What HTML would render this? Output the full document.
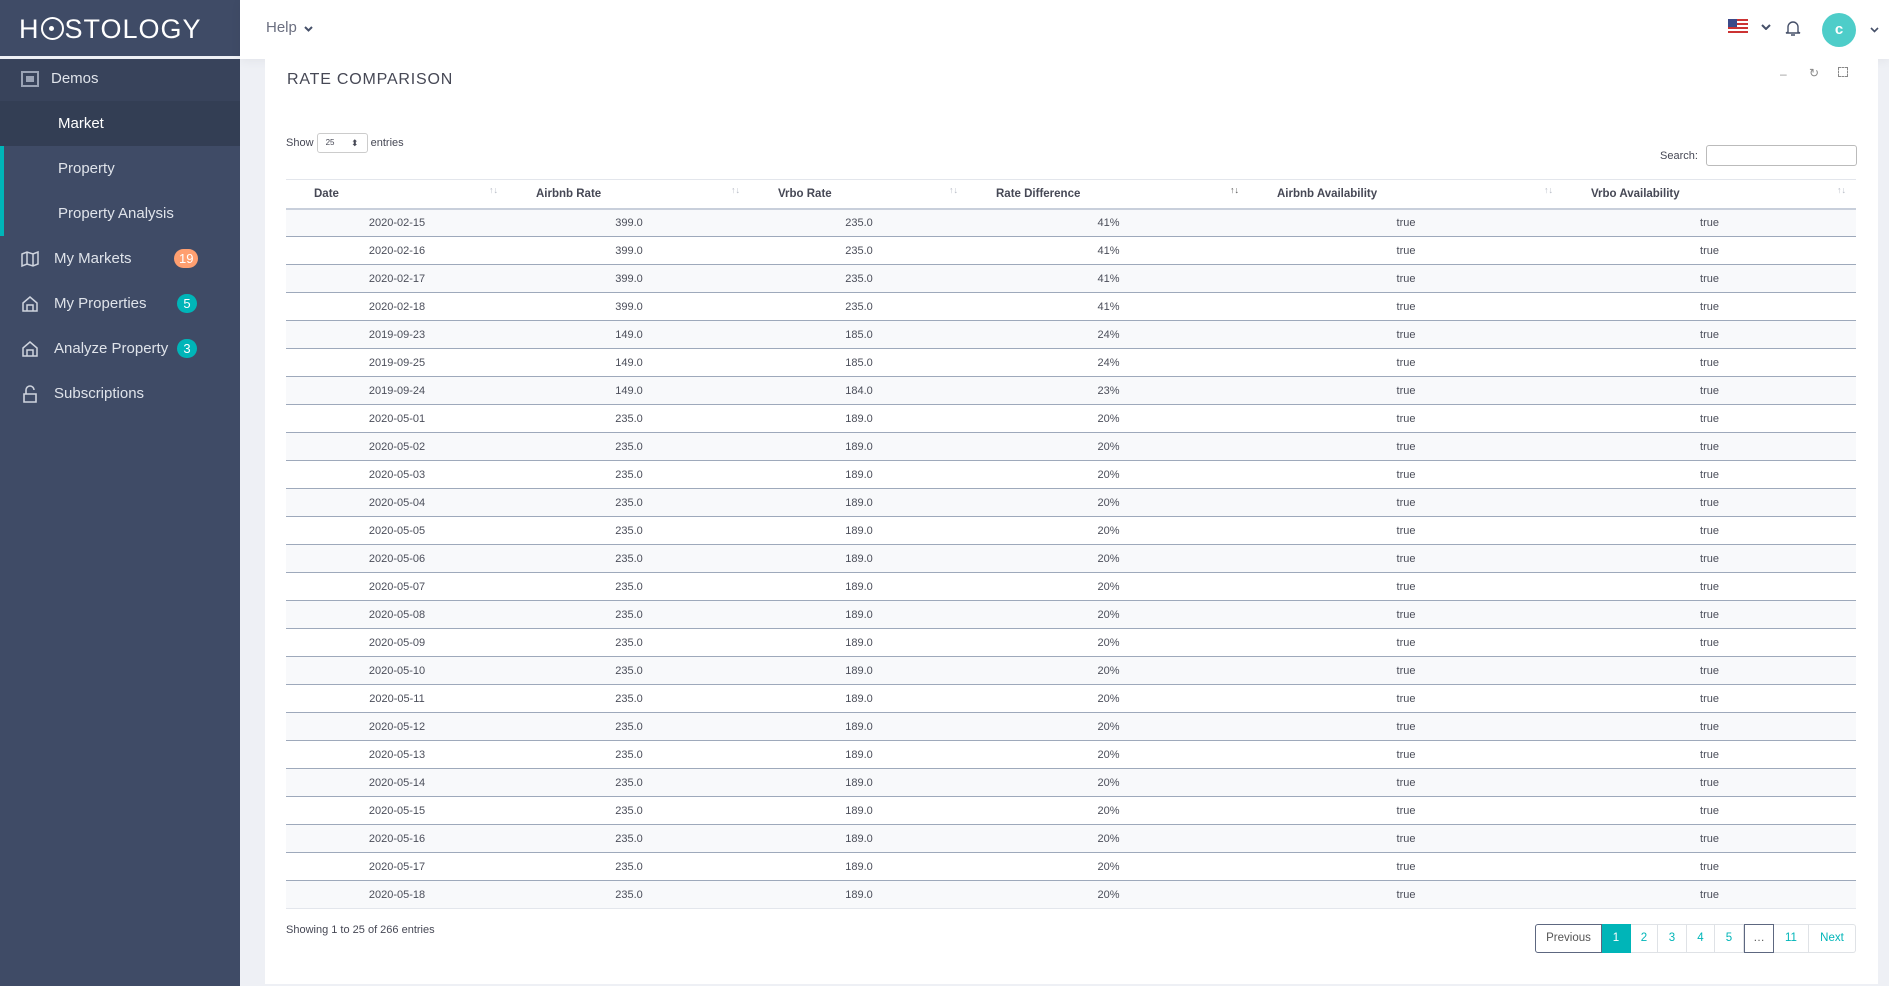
<!DOCTYPE html>
<html><head><meta charset="utf-8"><style>
*{box-sizing:border-box;margin:0;padding:0}
body{width:1889px;height:986px;overflow:hidden;background:#eef0f5;font-family:"Liberation Sans",sans-serif;color:#464855;position:relative}
.logo{position:absolute;left:0;top:0;width:240px;height:56px;background:#3f4b66;color:#fff;font-size:27px;letter-spacing:1px;padding:14px 0 0 19px;font-weight:normal}
.logo .o{display:inline-block;width:23px;height:23px;border:2.5px solid #fff;border-radius:50%;position:relative;vertical-align:-2px;margin:0 1px}
.logo .o:after{content:"";position:absolute;left:6.5px;top:6.5px;width:5px;height:5px;border-radius:50%;background:#fff}
.top{position:absolute;left:240px;top:0;right:0;height:59px;background:#fff;box-shadow:0 2px 10px rgba(0,0,0,.05)}
.side{position:absolute;left:0;top:59px;width:240px;bottom:0;background:#3f4b66}
.item{height:45px;line-height:45px;color:#dfe3ea;font-size:15px;position:relative}
.item .ic{position:absolute;left:21px;top:14px;width:18px;height:18px}
.sub{padding-left:58px}
.bar{position:absolute;left:0;top:0;width:4px;height:177px;background:#00b5b8}
.badge{position:absolute;left:174px;top:13px;height:19px;line-height:19px;border-radius:10px;color:#fff;font-size:13px;text-align:center;min-width:20px;padding:0 5px}
.card{position:absolute;left:265px;top:59px;width:1613px;height:925px;background:#fff}
table{position:absolute;left:21px;top:120px;width:1570px;border-collapse:collapse;font-size:11px}
th{height:29px;text-align:left;padding-left:28px;font-weight:bold;font-size:11.5px;color:#464855;border-top:1px solid #e3e6ec;border-bottom:2px solid #c8cfdb;position:relative}
th span{position:absolute;right:10px;top:5px;color:#b5bac4;font-size:9px;font-weight:normal}
td{height:28px;text-align:center;border-bottom:1px solid #9ea9bb;color:#4b4e5a}
tr:nth-child(odd) td{background:#f8f9fb}
.pg{position:absolute;top:865px;height:29px;font-size:11.5px;display:flex}
.pg div{border:1px solid #dfe2e6;border-left:none;line-height:27px;text-align:center;color:#00b5b8}
</style></head><body>
<div class="logo">H<span class="o"></span>STOLOGY</div>
<div class="top">
 <div style="position:absolute;left:26px;top:19px;font-size:15px;color:#6b6f80">Help</div>
 <svg style="position:absolute;left:64px;top:26px" width="9" height="6"><path d="M1 1l3.5 3.5 3.5-3.5" stroke="#465069" stroke-width="2" fill="none"/></svg>
 <svg style="position:absolute;left:1488px;top:19px" width="20" height="14"><rect width="20" height="14" fill="#fff"/><g fill="#c33"><rect y="0" width="20" height="2"/><rect y="4" width="20" height="2"/><rect y="8" width="20" height="2"/><rect y="12" width="20" height="2"/></g><rect width="9" height="8" fill="#3c4a8a"/></svg>
 <svg style="position:absolute;left:1521px;top:24px" width="10" height="6"><path d="M1 1l4 4 4-4" stroke="#465069" stroke-width="2" fill="none"/></svg>
 <svg style="position:absolute;left:1545px;top:19px" width="16" height="18"><path d="M3 13V8a5 5 0 0 1 10 0v5l2 1H1z M6 16h4" stroke="#465069" stroke-width="1.4" fill="none"/></svg>
 <div style="position:absolute;left:1582px;top:13px;width:34px;height:34px;border-radius:50%;background:#4ecdc9;color:#fff;font-weight:bold;text-align:center;line-height:34px;font-size:15px">c</div>
 <svg style="position:absolute;left:1630px;top:27px" width="9" height="6"><path d="M1 1l3.5 3.5 3.5-3.5" stroke="#465069" stroke-width="1.6" fill="none"/></svg>
</div>
<div class="side">
 <div class="bar"></div>
 <div class="item" style="padding-left:51px;background:#38435b;height:42px;line-height:40px"><svg class="ic" style="top:11px" viewBox="0 0 18 18"><rect x="1" y="2" width="16" height="14" fill="none" stroke="#9aa3b5" stroke-width="2"/><rect x="5" y="6" width="8" height="6" fill="#9aa3b5"/></svg>Demos</div>
 <div class="item sub" style="background:#333e54;color:#fff">Market</div>
 <div class="item sub">Property</div>
 <div class="item sub">Property Analysis</div>
 <div class="item" style="padding-left:54px"><svg class="ic" viewBox="0 0 18 18"><path d="M1 4l5-2 6 2 5-2v12l-5 2-6-2-5 2z M6 2v12 M12 4v12" fill="none" stroke="#cfd4de" stroke-width="1.5"/></svg>My Markets<span class="badge" style="background:#ff9f70">19</span></div>
 <div class="item" style="padding-left:54px"><svg class="ic" viewBox="0 0 18 18"><path d="M2 8l7-6 7 6v8H2z M6 16v-6h6v6" fill="none" stroke="#cfd4de" stroke-width="1.5"/></svg>My Properties<span class="badge" style="background:#00b5b8;left:177px">5</span></div>
 <div class="item" style="padding-left:54px"><svg class="ic" viewBox="0 0 18 18"><path d="M2 8l7-6 7 6v8H2z M6 16v-6h6v6" fill="none" stroke="#cfd4de" stroke-width="1.5"/></svg>Analyze Property<span class="badge" style="background:#00b5b8;left:177px">3</span></div>
 <div class="item" style="padding-left:54px"><svg class="ic" viewBox="0 0 18 18"><path d="M3 9h12v8H3z M5 9V5a4 4 0 0 1 8 0" fill="none" stroke="#cfd4de" stroke-width="1.6"/></svg>Subscriptions</div>
</div>
<div class="card">
 <div style="position:absolute;left:22px;top:12px;font-size:16px;letter-spacing:.8px;color:#464855">RATE COMPARISON</div>
 <div style="position:absolute;left:1515px;top:8px;color:#999;font-size:12px">–</div>
 <div style="position:absolute;left:1544px;top:7px;color:#888;font-size:12px">&#x21bb;</div>
 <div style="position:absolute;left:1573px;top:8px;width:10px;height:10px;border:1.5px dashed #888"></div>
 <div style="position:absolute;left:21px;top:74px;font-size:11px">Show <span style="display:inline-block;width:51px;height:20px;border:1px solid #ccc;border-radius:3px;font-size:8px;line-height:18px;padding-left:8px;vertical-align:middle;position:relative">25<span style="position:absolute;right:8px;top:0;font-size:9px">&#x2B0D;</span></span> entries</div>
 <div style="position:absolute;left:1395px;top:91px;font-size:11px">Search:</div>
 <div style="position:absolute;left:1441px;top:86px;width:151px;height:21px;border:1px solid #bbb;border-radius:3px"></div>
 <table>
  <thead><tr><th style="width:222px">Date<span>↑↓</span></th><th style="width:242px">Airbnb Rate<span>↑↓</span></th><th style="width:218px">Vrbo Rate<span>↑↓</span></th><th style="width:281px">Rate Difference<span style="color:#555">↑↓</span></th><th style="width:314px">Airbnb Availability<span>↑↓</span></th><th>Vrbo Availability<span>↑↓</span></th></tr></thead>
  <tbody>
<tr><td>2020-02-15</td><td>399.0</td><td>235.0</td><td>41%</td><td>true</td><td>true</td></tr>
<tr><td>2020-02-16</td><td>399.0</td><td>235.0</td><td>41%</td><td>true</td><td>true</td></tr>
<tr><td>2020-02-17</td><td>399.0</td><td>235.0</td><td>41%</td><td>true</td><td>true</td></tr>
<tr><td>2020-02-18</td><td>399.0</td><td>235.0</td><td>41%</td><td>true</td><td>true</td></tr>
<tr><td>2019-09-23</td><td>149.0</td><td>185.0</td><td>24%</td><td>true</td><td>true</td></tr>
<tr><td>2019-09-25</td><td>149.0</td><td>185.0</td><td>24%</td><td>true</td><td>true</td></tr>
<tr><td>2019-09-24</td><td>149.0</td><td>184.0</td><td>23%</td><td>true</td><td>true</td></tr>
<tr><td>2020-05-01</td><td>235.0</td><td>189.0</td><td>20%</td><td>true</td><td>true</td></tr>
<tr><td>2020-05-02</td><td>235.0</td><td>189.0</td><td>20%</td><td>true</td><td>true</td></tr>
<tr><td>2020-05-03</td><td>235.0</td><td>189.0</td><td>20%</td><td>true</td><td>true</td></tr>
<tr><td>2020-05-04</td><td>235.0</td><td>189.0</td><td>20%</td><td>true</td><td>true</td></tr>
<tr><td>2020-05-05</td><td>235.0</td><td>189.0</td><td>20%</td><td>true</td><td>true</td></tr>
<tr><td>2020-05-06</td><td>235.0</td><td>189.0</td><td>20%</td><td>true</td><td>true</td></tr>
<tr><td>2020-05-07</td><td>235.0</td><td>189.0</td><td>20%</td><td>true</td><td>true</td></tr>
<tr><td>2020-05-08</td><td>235.0</td><td>189.0</td><td>20%</td><td>true</td><td>true</td></tr>
<tr><td>2020-05-09</td><td>235.0</td><td>189.0</td><td>20%</td><td>true</td><td>true</td></tr>
<tr><td>2020-05-10</td><td>235.0</td><td>189.0</td><td>20%</td><td>true</td><td>true</td></tr>
<tr><td>2020-05-11</td><td>235.0</td><td>189.0</td><td>20%</td><td>true</td><td>true</td></tr>
<tr><td>2020-05-12</td><td>235.0</td><td>189.0</td><td>20%</td><td>true</td><td>true</td></tr>
<tr><td>2020-05-13</td><td>235.0</td><td>189.0</td><td>20%</td><td>true</td><td>true</td></tr>
<tr><td>2020-05-14</td><td>235.0</td><td>189.0</td><td>20%</td><td>true</td><td>true</td></tr>
<tr><td>2020-05-15</td><td>235.0</td><td>189.0</td><td>20%</td><td>true</td><td>true</td></tr>
<tr><td>2020-05-16</td><td>235.0</td><td>189.0</td><td>20%</td><td>true</td><td>true</td></tr>
<tr><td>2020-05-17</td><td>235.0</td><td>189.0</td><td>20%</td><td>true</td><td>true</td></tr>
<tr><td style="border-bottom-color:#e3e6ec">2020-05-18</td><td style="border-bottom-color:#e3e6ec">235.0</td><td style="border-bottom-color:#e3e6ec">189.0</td><td style="border-bottom-color:#e3e6ec">20%</td><td style="border-bottom-color:#e3e6ec">true</td><td style="border-bottom-color:#e3e6ec">true</td></tr>
  </tbody>
 </table>
 <div style="position:absolute;left:21px;top:865px;font-size:11px">Showing 1 to 25 of 266 entries</div>
 <div class="pg" style="left:1270px">
  <div style="width:67px;border:1px solid #5d6780;border-radius:3px 0 0 3px;color:#555">Previous</div>
  <div style="width:29px;background:#00b5b8;color:#fff;border-color:#00b5b8">1</div>
  <div style="width:27px">2</div><div style="width:29px">3</div><div style="width:28px">4</div><div style="width:29px">5</div>
  <div style="width:30px;border:1px solid #5d6780;color:#555">…</div>
  <div style="width:35px">11</div>
  <div style="width:47px;border-radius:0 3px 3px 0">Next</div>
 </div>
</div>
</body></html>
